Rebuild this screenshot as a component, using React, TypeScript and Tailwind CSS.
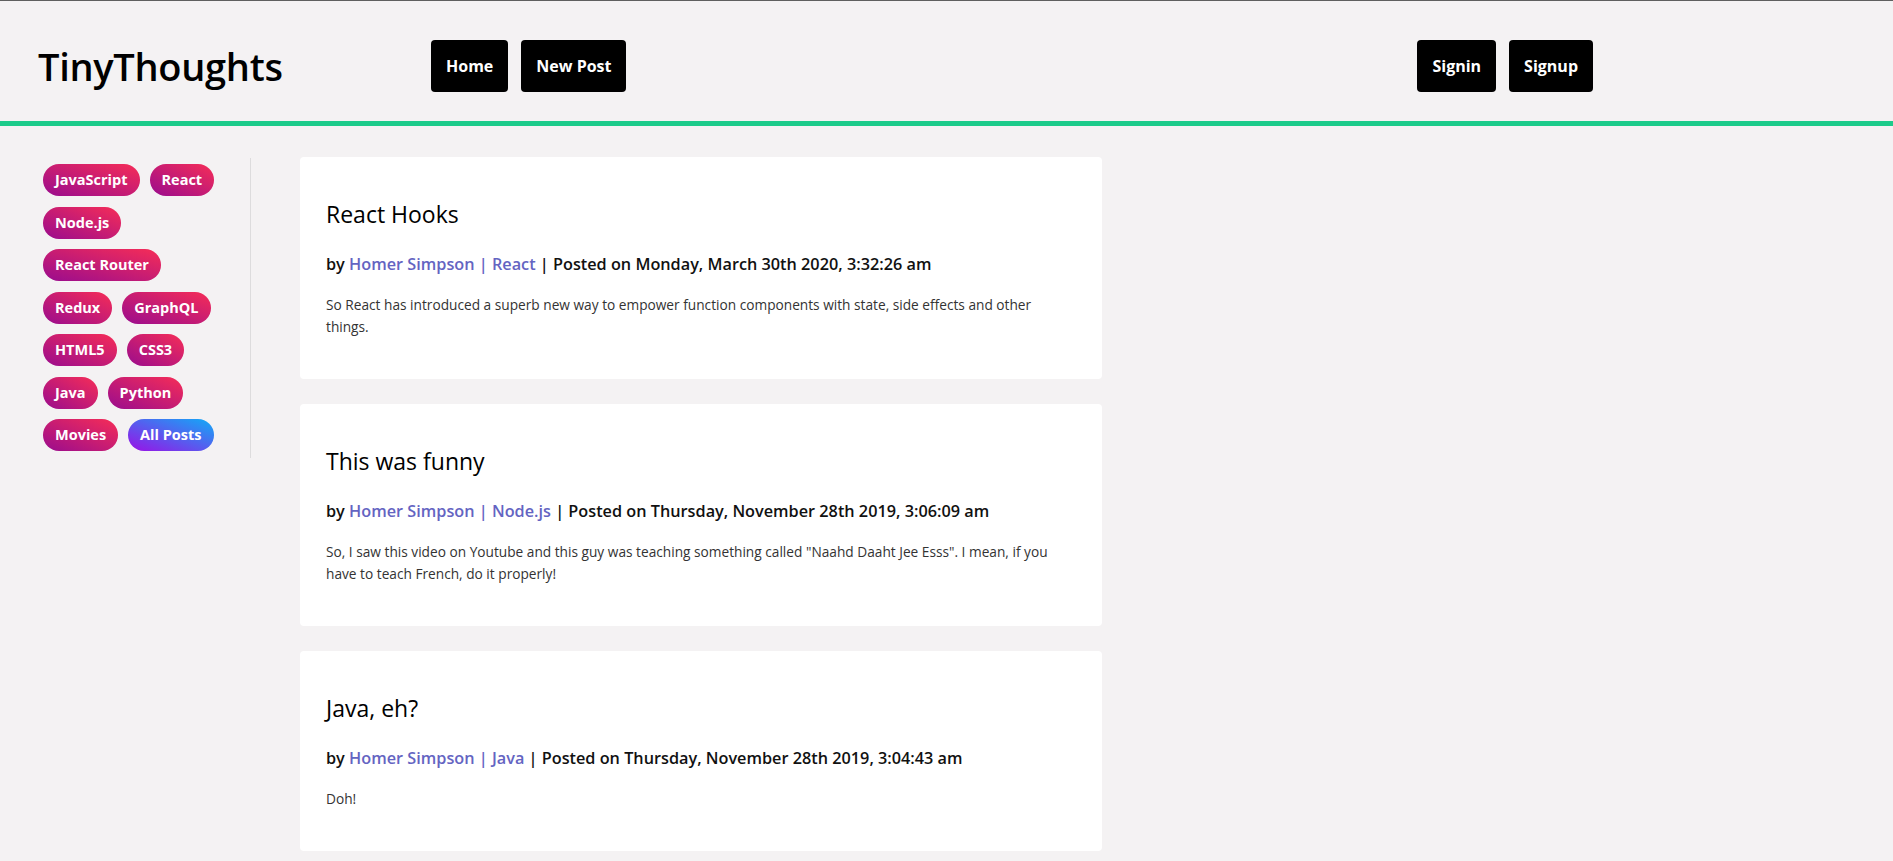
import React from "react";

const tags = [
  "JavaScript",
  "React",
  "Node.js",
  "React Router",
  "Redux",
  "GraphQL",
  "HTML5",
  "CSS3",
  "Java",
  "Python",
  "Movies",
];

const posts = [
  {
    title: "React Hooks",
    tag: "React",
    date: "Monday, March 30th 2020, 3:32:26 am",
    body: "So React has introduced a superb new way to empower function components with state, side effects and other things.",
  },
  {
    title: "This was funny",
    tag: "Node.js",
    date: "Thursday, November 28th 2019, 3:06:09 am",
    body: 'So, I saw this video on Youtube and this guy was teaching something called "Naahd Daaht Jee Esss". I mean, if you have to teach French, do it properly!',
  },
  {
    title: "Java, eh?",
    tag: "Java",
    date: "Thursday, November 28th 2019, 3:04:43 am",
    body: "Doh!",
  },
];

function NavButton({ label }: { label: string }) {
  return (
    <a className="block rounded-[4px] bg-black px-[15px] py-[16px] text-[16px] font-bold leading-[20px] text-white">
      {label}
    </a>
  );
}

export default function App() {
  return (
    <div
      className="min-h-screen bg-[#f4f2f3] text-black"
      style={{ fontFamily: '"Open Sans", "Noto Sans", sans-serif' }}
    >
      <header className="flex h-[126px] items-center border-t border-t-[#5f5f5f] border-b-[5px] border-b-[#1ccb8a] pl-[38px] pr-[300px] pt-[10px]">
        <div className="w-[393px] text-[38px] font-semibold leading-[52px] tracking-[-0.3px]">
          TinyThoughts
        </div>
        <nav className="flex gap-[13px]">
          <NavButton label="Home" />
          <NavButton label="New Post" />
        </nav>
        <nav className="ml-auto flex gap-[13px]">
          <NavButton label="Signin" />
          <NavButton label="Signup" />
        </nav>
      </header>

      <div className="flex items-start pt-[31px]">
        <aside className="mt-[1px] flex w-[251px] border-r border-[#dddcdd] pl-[43px] pr-[17px] pb-[7px] pt-[6px]">
          <div className="flex flex-wrap gap-x-[10px] gap-y-[10.5px]">
            {tags.map((t) => (
              <span
                key={t}
                className="rounded-full bg-linear-to-tr/srgb from-[#9a0c8e] to-[#f62d57] px-[12px] py-[6px] text-[14.5px] font-bold leading-[20px] text-white"
              >
                {t}
              </span>
            ))}
            <span className="rounded-full bg-linear-to-tr/srgb from-[#9b10e6] to-[#10acf7] px-[12px] py-[6px] text-[14.5px] font-bold leading-[20px] text-white">
              All Posts
            </span>
          </div>
        </aside>

        <main className="ml-[49px] flex w-[802px] flex-col gap-[25px]">
          {posts.map((p) => (
            <article
              key={p.title}
              className="rounded-[4px] bg-white px-[26px] pb-[41px] pt-[41px]"
            >
              <h2 className="mb-[22px] text-[23px] font-medium leading-[32px] text-black">
                {p.title}
              </h2>
              <div className="mb-[18px] text-[16.25px] font-semibold leading-[24px] text-[#111]">
                by{" "}
                <span className="text-[#6464c2]">
                  Homer Simpson | {p.tag}
                </span>{" "}
                | Posted on {p.date}
              </div>
              <p className="text-[13.7px] leading-[22px] text-[#333]">{p.body}</p>
            </article>
          ))}
        </main>
      </div>
    </div>
  );
}
